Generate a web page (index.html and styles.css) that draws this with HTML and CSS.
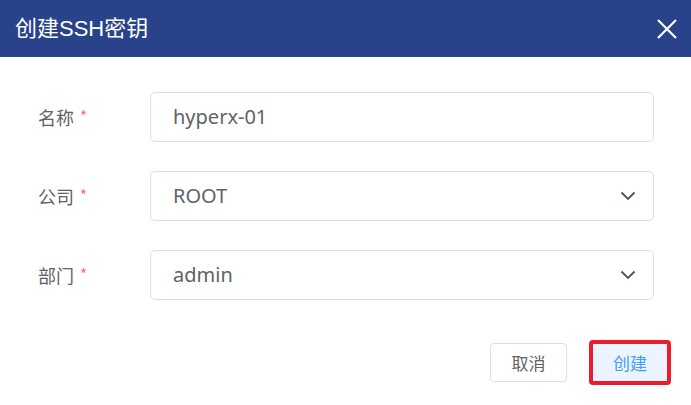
FILE: index.html
```html
<!DOCTYPE html>
<html lang="zh">
<head>
<meta charset="utf-8">
<title>创建SSH密钥</title>
<link rel="stylesheet" href="styles.css">
</head>
<body>
<div class="dialog">
  <div class="header">
    <span class="title">创建SSH密钥</span>
    <svg class="close" width="20" height="20" viewBox="0 0 20 20"><path d="M1 1 L19 19 M19 1 L1 19" stroke="#fff" stroke-width="2.2" fill="none"/></svg>
  </div>
  <div class="form">
    <div class="row">
      <label class="label">名称<span class="req">*</span></label>
      <div class="field"><span class="value">hyperx-01</span></div>
    </div>
    <div class="row">
      <label class="label">公司<span class="req">*</span></label>
      <div class="field"><span class="value">ROOT</span>
        <svg class="chev" width="16" height="10" viewBox="0 0 16 10"><path d="M1.5 1.5 L8 8 L14.5 1.5" stroke="#4a5068" stroke-width="1.8" fill="none"/></svg>
      </div>
    </div>
    <div class="row">
      <label class="label">部门<span class="req">*</span></label>
      <div class="field"><span class="value">admin</span>
        <svg class="chev" width="16" height="10" viewBox="0 0 16 10"><path d="M1.5 1.5 L8 8 L14.5 1.5" stroke="#4a5068" stroke-width="1.8" fill="none"/></svg>
      </div>
    </div>
  </div>
  <div class="footer">
    <button class="btn btn-cancel">取消</button>
    <button class="btn btn-primary">创建</button>
  </div>
</div>
</body>
</html>
```
FILE: styles.css
```css
html, body {
  margin: 0;
  padding: 0;
  background: #fff;
}
body {
  font-family: "Noto Sans", "Noto Sans CJK SC", sans-serif;
  color: #606266;
}
.dialog {
  width: 691px;
  height: 405px;
  background: #fff;
}
.header {
  height: 57px;
  background: #29438a;
  display: flex;
  align-items: center;
  justify-content: space-between;
  padding: 0 14px 0 15px;
  box-sizing: border-box;
}
.title {
  color: #fff;
  font-size: 22px;
  font-family: "Liberation Sans", "Noto Sans CJK SC", sans-serif;
  line-height: 1;
}
.close {
  display: block;
}
.form {
  padding: 35px 37px 0 38px;
  display: flex;
  flex-direction: column;
  gap: 29px;
}
.row {
  display: flex;
  align-items: center;
  height: 50px;
}
.label {
  width: 112px;
  font-size: 18px;
  color: #606266;
  font-family: "Noto Sans CJK SC", sans-serif;
  display: flex;
  align-items: center;
  line-height: 1;
}
.req {
  color: #f56c6c;
  font-size: 15px;
  margin-left: 6px;
  line-height: 1;
  margin-bottom: 3px;
}
.field {
  flex: 1;
  height: 50px;
  box-sizing: border-box;
  border: 1px solid #dcdfe6;
  border-radius: 5px;
  display: flex;
  align-items: center;
  justify-content: space-between;
  padding: 0 17px 0 22px;
}
.value {
  font-size: 20px;
  color: #606266;
  line-height: 1;
}
.chev {
  display: block;
}
.footer {
  display: flex;
  justify-content: flex-end;
  align-items: center;
  gap: 22px;
  padding: 40px 20px 0 0;
}
.btn {
  font-family: "Noto Sans CJK SC", sans-serif;
  font-size: 17px;
  border-radius: 4px;
  box-sizing: border-box;
  cursor: pointer;
  padding: 0;
}
.btn-cancel {
  width: 77px;
  height: 39px;
  background: #fff;
  border: 1px solid #dcdfe6;
  color: #606266;
}
.btn-primary {
  width: 82px;
  height: 45px;
  background: #ecf5ff;
  border: 4px solid #ec1c2a;
  color: #409eff;
}
```
